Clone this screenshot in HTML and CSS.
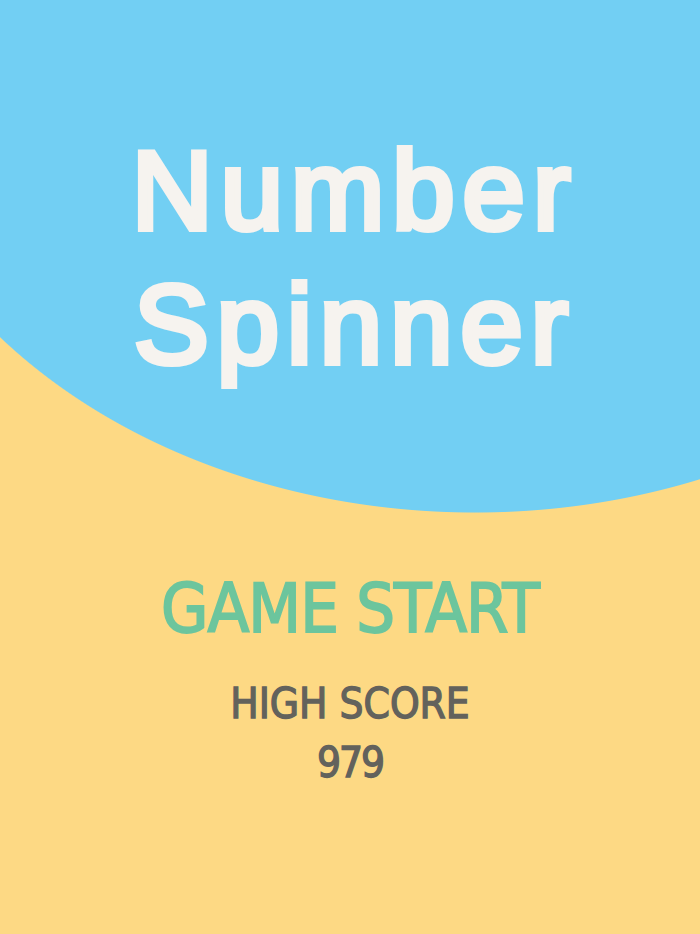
FILE: index.html
```html
<!DOCTYPE html>
<html lang="en">
<head>
<meta charset="utf-8">
<title>Number Spinner</title>
<link rel="stylesheet" href="styles.css">
</head>
<body>
  <main class="screen">
    <h1 class="title">Number<br>Spinner</h1>
    <button class="start" type="button">GAME START</button>
    <div class="score">
      <div class="score-label">HIGH SCORE</div>
      <div class="score-value">979</div>
    </div>
  </main>
</body>
</html>
```

FILE: styles.css
```css
html, body {
  margin: 0;
  padding: 0;
}

body {
  width: 700px;
  height: 934px;
  overflow: hidden;
  /* sky-blue ellipse hanging over the sand-yellow backdrop */
  background: radial-gradient(ellipse 615px 480px at 475px 33px, #72cff3 99.8%, #fdd984 100%);
}

.screen {
  display: flex;
  flex-direction: column;
  align-items: center;
  height: 934px;
}

/* a regular face thickened with a stroke gives softer, rounder letters */
.title {
  margin: 0;
  padding-top: 124px;
  padding-left: 10px;
  font-family: "Liberation Sans", Arial, sans-serif;
  font-weight: normal;
  font-size: 112px;
  line-height: 134px;
  text-align: center;
  color: #f6f3ef;
  -webkit-text-stroke: 6px #f6f3ef;
  letter-spacing: 8px;
}

.start {
  margin-top: 177px;
  padding: 0;
  border: 0;
  background: none;
  font-family: "DejaVu Sans Condensed", "DejaVu Sans", sans-serif;
  font-size: 68px;
  line-height: 80px;
  color: #6cc59d;
  -webkit-text-stroke: 1.8px #6cc59d;
  letter-spacing: -1px;
  cursor: pointer;
}

.score {
  margin-top: 25px;
  display: flex;
  flex-direction: column;
  align-items: center;
  font-family: "DejaVu Sans Condensed", "DejaVu Sans", sans-serif;
  font-size: 42px;
  line-height: 59px;
  color: #63625c;
  -webkit-text-stroke: 1.3px #63625c;
}

.score-value {
  letter-spacing: -2px;
}
```
